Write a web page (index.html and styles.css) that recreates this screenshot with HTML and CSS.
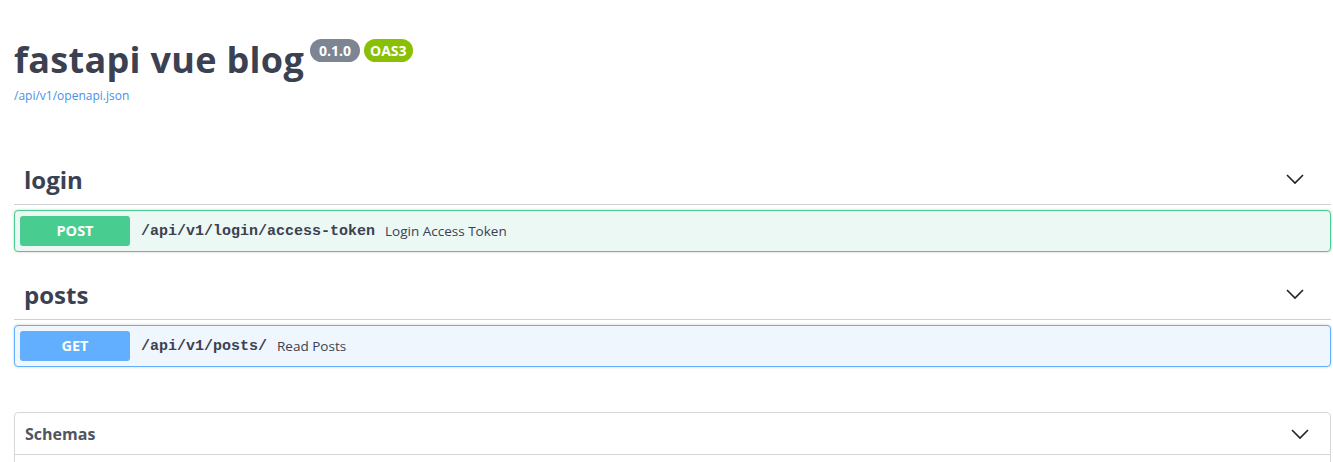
FILE: index.html
```html
<!DOCTYPE html>
<html>
<head>
<meta charset="utf-8">
<link rel="stylesheet" href="styles.css">
</head>
<body>
<div class="wrapper">
  <div class="info">
    <div class="title-row">
      <h2 class="title">fastapi vue blog</h2>
      <span class="badge badge-version">0.1.0</span>
      <span class="badge badge-oas">OAS3</span>
    </div>
    <a class="link" href="#">/api/v1/openapi.json</a>
  </div>

  <div class="tag-section first">
    <div class="tag-header">
      <span class="tag-name">login</span>
      <svg class="chevron" width="20" height="20" viewBox="0 0 20 20"><path d="M2 6 L10 14 L18 6" fill="none" stroke="#222" stroke-width="1.6"/></svg>
    </div>
    <div class="opblock opblock-post">
      <span class="method method-post">POST</span>
      <span class="path">/api/v1/login/access-token</span>
      <span class="summary">Login Access Token</span>
    </div>
  </div>

  <div class="tag-section">
    <div class="tag-header">
      <span class="tag-name">posts</span>
      <svg class="chevron" width="20" height="20" viewBox="0 0 20 20"><path d="M2 6 L10 14 L18 6" fill="none" stroke="#222" stroke-width="1.6"/></svg>
    </div>
    <div class="opblock opblock-get">
      <span class="method method-get">GET</span>
      <span class="path">/api/v1/posts/</span>
      <span class="summary">Read Posts</span>
    </div>
  </div>

  <div class="models">
    <div class="models-header">
      <span class="models-title">Schemas</span>
      <svg class="chevron" width="20" height="20" viewBox="0 0 20 20"><path d="M2 6 L10 14 L18 6" fill="none" stroke="#222" stroke-width="1.6"/></svg>
    </div>
  </div>
</div>
</body>
</html>
```

FILE: styles.css
```css
html, body {
  margin: 0;
  padding: 0;
  background: #fff;
}
body {
  font-family: "Open Sans", "Noto Sans", sans-serif;
  color: #3b4151;
}
.wrapper {
  padding: 0 2px 0 14px;
}
.info {
  padding-top: 37px;
}
.title-row {
  display: flex;
  align-items: flex-start;
}
.title {
  margin: 0;
  font-size: 36px;
  font-weight: 700;
  line-height: 46px;
  color: #3b4151;
  letter-spacing: 0.3px;
}
.badge {
  display: inline-block;
  color: #fff;
  font-weight: 700;
  font-size: 14px;
  line-height: 23px;
  height: 23px;
  border-radius: 12px;
  margin-top: 2px;
}
.badge-version {
  background: #7d8492;
  margin-left: 6px;
  padding: 0 9px;
}
.badge-oas {
  background: #89bf04;
  margin-left: 4px;
  padding: 0 6px;
}
.link {
  display: block;
  font-size: 12px;
  line-height: 16px;
  color: #4990e2;
  text-decoration: none;
  margin-top: 5px;
}
.tag-header {
  display: flex;
  align-items: center;
  justify-content: space-between;
  height: 50px;
  padding: 0 26px 0 10px;
  border-bottom: 1px solid #d0d0d4;
  margin-top: 17px;
}
.first .tag-header {
  margin-top: 50px;
}
.tag-name {
  font-size: 24px;
  font-weight: 700;
  color: #3b4151;
}
.opblock {
  display: flex;
  align-items: center;
  height: 40px;
  margin-top: 5px;
  border: 1px solid;
  border-radius: 4px;
  padding: 0 5px;
  box-shadow: 0 0 3px rgba(0,0,0,0.19);
}
.opblock-post {
  border-color: #49cc90;
  background: #ecf8f3;
}
.opblock-get {
  border-color: #61affe;
  background: #eff6fe;
}
.method {
  width: 110px;
  height: 30px;
  line-height: 30px;
  border-radius: 3px;
  color: #fff;
  font-size: 14.5px;
  font-weight: 700;
  text-align: center;
  flex: none;
}
.method-post { background: #49cc90; }
.method-get { background: #61affe; }
.path {
  font-family: "Liberation Mono", "DejaVu Sans Mono", monospace;
  font-weight: 700;
  font-size: 15px;
  color: #3b4151;
  margin-left: 11px;
}
.summary {
  font-size: 13.5px;
  color: #3b4151;
  margin-left: 10px;
}
.models {
  margin-top: 45px;
  border: 1px solid #d6d7db;
  border-radius: 4px;
  height: 60px;
}
.models-header {
  display: flex;
  align-items: center;
  justify-content: space-between;
  height: 41px;
  padding: 0 20px 0 10px;
  border-bottom: 1px solid #d6d7db;
}
.models-title {
  font-size: 16px;
  font-weight: 700;
  color: #505560;
}
```
